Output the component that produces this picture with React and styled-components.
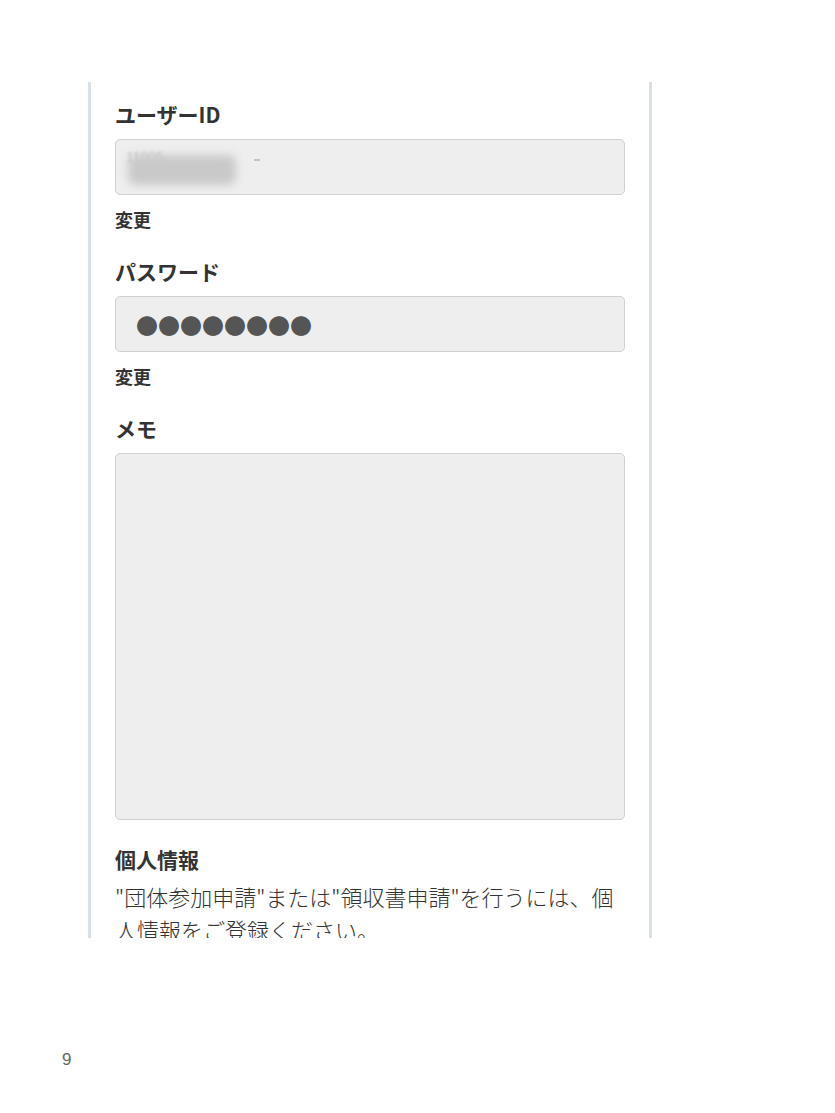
import React from "react";
import styled, { createGlobalStyle } from "styled-components";

const Global = createGlobalStyle`
  html, body { margin: 0; padding: 0; background: #ffffff; }
  body { font-family: "Noto Sans CJK JP", "Noto Sans", sans-serif; color: #333333; }
`;

const Page = styled.div`
  width: 835px;
  height: 1113px;
  padding-top: 82px;
  box-sizing: border-box;
`;

const Panel = styled.section`
  margin-left: 88px;
  width: 564px;
  height: 856px;
  box-sizing: border-box;
  border-left: 3px solid #d7dfe7;
  border-right: 3px solid #d7dfe7;
  padding: 17px 24px 0 24px;
  overflow: hidden;
  display: flex;
  flex-direction: column;
  & > * { flex-shrink: 0; }
`;

const Label = styled.h3`
  margin: ${(p) => p.$mt || 0}px 0 0 0;
  font-size: 21px;
  line-height: 30px;
  font-weight: 700;
  color: #333333;
`;

const Field = styled.div`
  margin-top: 10px;
  height: ${(p) => p.$h}px;
  box-sizing: border-box;
  background: #eeeeee;
  border: 1.5px solid #d0d0d0;
  border-radius: 5px;
  display: flex;
  align-items: center;
  padding-left: 20px;
  position: relative;
  overflow: hidden;
`;

const ChangeLink = styled.a`
  margin-top: 11px;
  font-size: 18px;
  line-height: 26px;
  font-weight: 700;
  color: #333333;
  text-decoration: none;
`;

const Dots = styled.span`
  font-size: 22px;
  color: #555555;
  letter-spacing: 0;
`;

const Blurred = styled.span`
  display: block;
  width: 108px;
  height: 30px;
  margin-left: -8px;
  margin-top: 6px;
  background: #c9c9c9;
  border-radius: 8px;
  filter: blur(4px);
`;

const Faint = styled.span`
  position: absolute;
  left: 10px;
  top: 9px;
  font-family: "Liberation Sans", sans-serif;
  font-size: 14px;
  color: #c4c4c4;
  filter: blur(0.8px);
`;

const FaintDash = styled.span`
  position: absolute;
  left: 138px;
  top: 19px;
  width: 6px;
  height: 2px;
  background: #c4c4c4;
`;

const Paragraph = styled.p`
  margin: 6px 0 0 0;
  font-size: 22px;
  line-height: 33px;
  font-weight: 300;
  color: #333333;
`;

const PageNumber = styled.div`
  margin-top: 112px;
  padding-left: 62px;
  font-family: "Liberation Sans", "Noto Sans", sans-serif;
  font-size: 17px;
  color: #666666;
`;

export default function App() {
  return (
    <>
      <Global />
      <Page>
        <Panel>
          <Label>ユーザーID</Label>
          <Field $h={56}>
            <Faint>11005</Faint>
            <FaintDash />
            <Blurred />
          </Field>
          <ChangeLink>変更</ChangeLink>
          <Label $mt={24}>パスワード</Label>
          <Field $h={56}>
            <Dots>●●●●●●●●</Dots>
          </Field>
          <ChangeLink>変更</ChangeLink>
          <Label $mt={24}>メモ</Label>
          <Field $h={367} />
          <Label $mt={24}>個人情報</Label>
          <Paragraph>
            "団体参加申請"または"領収書申請"を行うには、個人情報をご登録ください。
          </Paragraph>
        </Panel>
        <PageNumber>9</PageNumber>
      </Page>
    </>
  );
}
